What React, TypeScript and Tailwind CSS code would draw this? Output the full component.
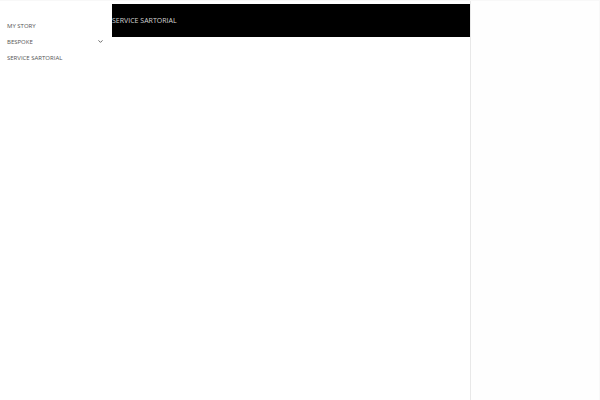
import { ChevronDown } from "lucide-react";

export default function App() {
  return (
    <div className="flex min-h-screen border-t border-r border-[#f8f8f8] bg-white font-['Open_Sans',sans-serif] leading-[16px]">
      {/* Side menu */}
      <nav className="w-28 shrink-0 pt-[17px] pr-2 pl-[7px] text-[6px] text-[#555555]">
        <ul>
          <li>
            <a href="#my-story">MY STORY</a>
          </li>
          <li className="flex items-center justify-between">
            <a href="#bespoke">BESPOKE</a>
            <button
              type="button"
              aria-label="Open Bespoke menu"
              className="pb-0.5"
            >
              <ChevronDown className="size-[7px]" strokeWidth={3} />
            </button>
          </li>
          <li>
            <a href="#service-sartorial">SERVICE SARTORIAL</a>
          </li>
        </ul>
      </nav>

      {/* Page */}
      <main className="min-w-0 flex-1 border-r border-[#e8e8e8] pt-[3px]">
        <header className="flex h-[33px] items-center bg-black">
          <a href="#service-sartorial" className="text-[7px] text-[#d4d4d4]">
            SERVICE SARTORIAL
          </a>
        </header>
      </main>

      <aside className="w-32 shrink-0 bg-[#fefefe]"></aside>
    </div>
  );
}
